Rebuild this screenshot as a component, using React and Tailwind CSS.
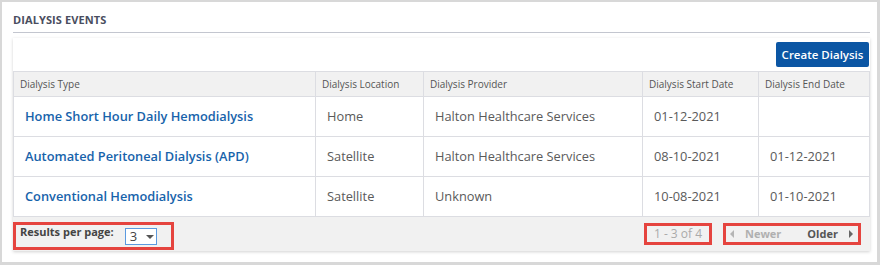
import React from "react";

const rows = [
  { type: "Home Short Hour Daily Hemodialysis", loc: "Home", prov: "Halton Healthcare Services", start: "01-12-2021", end: "" },
  { type: "Automated Peritoneal Dialysis (APD)", loc: "Satellite", prov: "Halton Healthcare Services", start: "08-10-2021", end: "01-12-2021" },
  { type: "Conventional Hemodialysis", loc: "Satellite", prov: "Unknown", start: "10-08-2021", end: "01-10-2021" },
];

const headers = ["Dialysis Type", "Dialysis Location", "Dialysis Provider", "Dialysis Start Date", "Dialysis End Date"];
const grid = "grid grid-cols-[303px_108px_219px_116px_111px]";

export default function App() {
  return (
    <div className="w-[880px] h-[265px] bg-[#d8d8d8] pt-[2px] pl-[2px] pr-[3px] pb-[3px]" style={{ fontFamily: '"Open Sans", "Noto Sans", sans-serif' }}>
      <div className="w-full h-full bg-white pl-[11px] pr-[5px] pt-[10px]">
        <div className="border-b border-[#c3c6cf] pb-[4px] w-[857px]">
          <div className="text-[11px] leading-[16px] font-bold text-[#4a4e60] tracking-[0.1px]">DIALYSIS EVENTS</div>
        </div>
        <div className="mt-[5px] w-[857px] bg-white shadow-[0_1px_3px_rgba(0,0,0,0.18)]">
          <div className="flex justify-end pt-[4px] pb-[4px] pr-[1px]">
            <button className="h-[25px] w-[93px] rounded-[2px] bg-[#0b56a4] text-white text-[11.5px] font-semibold leading-none">Create Dialysis</button>
          </div>
          <div className={`${grid} h-[26px] bg-[#f1f1f1] border-t border-[#dcdde2]`}>
            {headers.map((h, i) => (
              <div key={h} className={`flex items-center pl-[6px] text-[10px] text-[#555] border-r border-b border-[#dcdde2] ${i === 0 ? "border-l" : ""}`}>{h}</div>
            ))}
          </div>
          {rows.map((r) => (
            <div key={r.type} className={`${grid} h-[40px]`}>
              <div className="flex items-center pl-[11px] text-[12.8px] font-semibold text-[#1763ab] border-l border-r border-b border-[#dcdde2]">{r.type}</div>
              <div className="flex items-center pl-[11px] text-[12.8px] text-[#5a5a5a] border-r border-b border-[#dcdde2]">{r.loc}</div>
              <div className="flex items-center pl-[11px] text-[12.8px] text-[#5a5a5a] border-r border-b border-[#dcdde2]">{r.prov}</div>
              <div className="flex items-center pl-[11px] text-[12.8px] text-[#5a5a5a] border-r border-b border-[#dcdde2]">{r.start}</div>
              <div className="flex items-center pl-[11px] text-[12.8px] text-[#5a5a5a] border-r border-b border-[#dcdde2]">{r.end}</div>
            </div>
          ))}
          <div className="h-[34px] bg-[#f1f1f1] flex items-start pr-[9px]">
            <div className="mt-[5px] h-[28px] w-[161px] border-[3px] border-[#e5443f] pl-[4px] flex items-start">
              <span className="text-[11px] leading-[14px] font-bold text-[#444]">Results per page:</span>
              <div className="ml-[11px] mt-[3px] h-[17px] w-[32px] border border-[#5b9ae0] bg-white flex items-center pl-[4px]">
                <span className="text-[13px] leading-none text-[#444]">3</span>
                <svg width="8" height="4" viewBox="0 0 8 4" className="ml-[9px]"><path d="M0 0H8L4 4Z" fill="#555" /></svg>
              </div>
            </div>
            <div className="flex-1" />
            <div className="mt-[6px] h-[22px] w-[68px] border-[3px] border-[#e5443f] flex items-center justify-center">
              <span className="text-[12px] text-[#aaa]">1 - 3 of 4</span>
            </div>
            <div className="ml-[11px] mt-[6px] h-[22px] w-[138px] border-[3px] border-[#e5443f] flex items-center pl-[4px]">
              <svg width="4" height="8" viewBox="0 0 4 8"><path d="M4 0V8L0 4Z" fill="#b5b5b5" /></svg>
              <span className="ml-[11px] text-[11px] font-bold text-[#b0b0b0]">Newer</span>
              <span className="ml-[26px] text-[11px] font-bold text-[#555]">Older</span>
              <svg width="4" height="8" viewBox="0 0 4 8" className="ml-[11px]"><path d="M0 0V8L4 4Z" fill="#666" /></svg>
            </div>
          </div>
        </div>
      </div>
    </div>
  );
}
